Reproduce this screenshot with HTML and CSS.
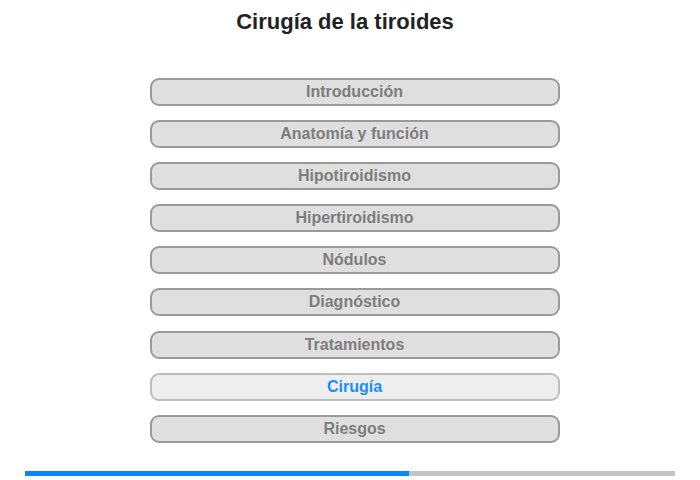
FILE: index.html
```html
<!DOCTYPE html>
<html lang="es">
<head>
<meta charset="utf-8">
<title>Cirugía de la tiroides</title>
<link rel="stylesheet" href="styles.css">
</head>
<body>
<div class="page">
  <h1 class="title">Cirugía de la tiroides</h1>
  <nav class="menu">
    <div class="item">Introducción</div>
    <div class="item">Anatomía y función</div>
    <div class="item">Hipotiroidismo</div>
    <div class="item">Hipertiroidismo</div>
    <div class="item">Nódulos</div>
    <div class="item">Diagnóstico</div>
    <div class="item">Tratamientos</div>
    <div class="item active">Cirugía</div>
    <div class="item">Riesgos</div>
  </nav>
  <div class="progress"><div class="progress-fill" style="width: 59%"></div></div>
</div>
</body>
</html>
```

FILE: styles.css
```css
html, body {
  margin: 0;
  padding: 0;
  background: #ffffff;
}
.page {
  width: 700px;
  height: 480px;
  font-family: "Liberation Sans", Arial, sans-serif;
  display: flex;
  flex-direction: column;
  align-items: center;
}
.title {
  margin: 8px 10px 0 0;
  font-size: 22px;
  line-height: 27px;
  font-weight: bold;
  color: #222222;
}
.menu {
  margin-top: 43px;
  margin-left: 9px;
  width: 410px;
  display: flex;
  flex-direction: column;
  gap: 14.1px;
}
.item {
  box-sizing: border-box;
  height: 28px;
  border: 2px solid #9a9a9a;
  border-radius: 9px;
  background: #dfdfdf;
  color: #7d7d7d;
  font-size: 16px;
  font-weight: bold;
  line-height: 24px;
  text-align: center;
}
.item.active {
  border-color: #bdbdbd;
  background: #eeeeee;
  color: #1a8cff;
}
.progress {
  margin-top: 28px;
  width: 650px;
  height: 5px;
  background: #c4c4c4;
}
.progress-fill {
  height: 100%;
  background: #0a84ff;
}
```
